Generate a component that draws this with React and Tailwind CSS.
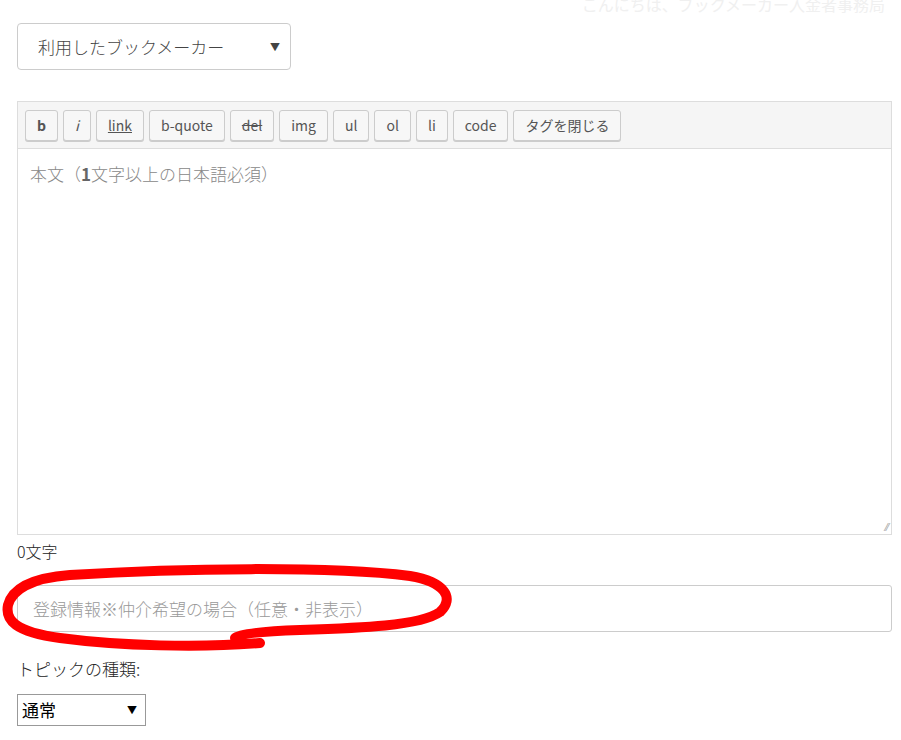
const btns = [
  { t: 'b', c: 'font-bold' },
  { t: 'i', c: 'italic' },
  { t: 'link', c: 'underline' },
  { t: 'b-quote', c: '' },
  { t: 'del', c: 'line-through' },
  { t: 'img', c: '' },
  { t: 'ul', c: '' },
  { t: 'ol', c: '' },
  { t: 'li', c: '' },
  { t: 'code', c: '' },
  { t: 'タグを閉じる', c: '' },
];

export default function App() {
  return (
    <div className="relative w-[901px] h-[740px] overflow-hidden bg-white text-[#333]" style={{ fontFamily: '"Noto Sans CJK JP", "Liberation Sans", sans-serif' }}>
      <div className="absolute right-[16px] -top-[8px] text-[16px] text-[#f0f0f0]">こんにちは、ブックメーカー入金者事務局</div>
      <div className="px-[17px] pt-[23px]">
        <div className="w-[274px] h-[47px] border border-[#ccc] rounded-[4px] flex items-center justify-between pl-[20px] pr-[10px] text-[17px] font-light text-[#444]">
          <span>利用したブックメーカー</span>
          <span className="text-[10px]">▼</span>
        </div>

        <div className="mt-[31px] w-[875px] border border-[#ddd]">
          <div className="h-[47px] bg-[#f5f5f5] border-b border-[#ddd] flex items-center gap-[5px] px-[7px]">
            {btns.map((b) => (
              <div key={b.t} className={`h-[31px] px-[11px] flex items-center border border-[#ccc] rounded-[3px] bg-[#f7f7f7] shadow-[0_1px_0_#ccc] text-[14px] text-[#555] ${b.c}`}>{b.t}</div>
            ))}
          </div>
          <div className="h-[385px] relative px-[12px] pt-[12px] text-[17px] font-light text-[#888]">
            本文（<span className="font-bold text-[#666]">1</span>文字以上の日本語必須）
            <span className="absolute right-[2px] bottom-[0px] text-[10px] text-[#999]">⁄⁄</span>
          </div>
        </div>

        <div className="mt-[4px] text-[16px] font-light text-[#222]">0文字</div>

        <div className="mt-[22px] w-[875px] h-[47px] border border-[#ccc] rounded-[3px] flex items-center px-[15px] text-[17px] font-light text-[#999]">
          登録情報※仲介希望の場合（任意・非表示）
        </div>

        <div className="mt-[24px] text-[17px] font-light text-[#222]">トピックの種類:</div>
        <div className="mt-[12px] w-[129px] h-[32px] border border-[#999] flex items-center justify-between pl-[4px] pr-[8px] text-[17px] text-black">
          <span>通常</span>
          <span className="text-[10px]">▼</span>
        </div>
      </div>

      <svg className="absolute left-0 top-0 pointer-events-none" width="901" height="740">
        <path d="M260 643 C200 648 120 646 60 638 C15 632 5 620 8 605 C12 590 30 578 70 575 C180 568 330 566 410 576 C445 582 455 598 440 612 C420 626 360 628 300 630 C270 631 240 633 235 638"
          fill="none" stroke="#ff0000" strokeWidth="10" strokeLinecap="round" />
      </svg>
    </div>
  );
}
